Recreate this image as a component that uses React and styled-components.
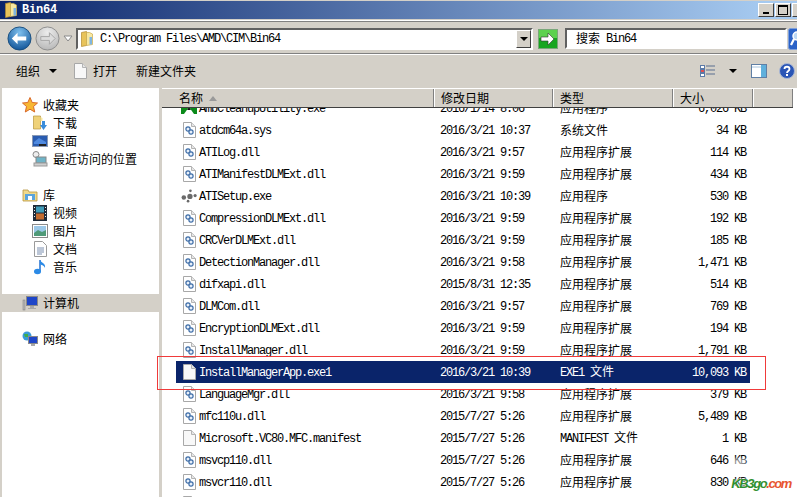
import React from 'react';
import styled, { createGlobalStyle } from 'styled-components';

const GlobalStyle = createGlobalStyle`
    html, body {
        margin: 0;
        padding: 0;
        overflow: hidden;
        background: #d4d0c8;
    }
`;

const cjk = `"Noto Sans CJK SC", "Liberation Sans", sans-serif`;
const mono = `"Liberation Mono", "DejaVu Sans Mono", monospace`;

const Win = styled.div`
    position: relative;
    width: 797px;
    height: 497px;
    display: flex;
    flex-direction: column;
    overflow: hidden;
    background: #d4d0c8;
    font-family: ${cjk};
    font-size: 12px;
    color: #000;
`;

const TitleBar = styled.div`
    height: 18px;
    margin-top: 1px;
    padding-left: 5px;
    display: flex;
    align-items: center;
    gap: 5px;
    background: linear-gradient(90deg, #0a246a 0%, #a6caf0 96%);
    flex-shrink: 0;
`;

const TitleText = styled.span`
    flex: 1;
    color: #fff;
    font: bold 12px ${mono};
    letter-spacing: -0.2px;
`;

const WinBtns = styled.div`
    display: flex;
    height: 14px;
    gap: 1px;
    margin-right: -11px;
`;

const WinBtn = styled.div`
    width: 16px;
    height: 14px;
    flex-shrink: 0;
    box-sizing: border-box;
    background: #d4d0c8;
    border: 1px solid;
    border-color: #fff #404040 #404040 #fff;
    display: flex;
    align-items: center;
    justify-content: center;
`;

const NavBar = styled.div`
    height: 35px;
    margin-top: 1px;
    box-sizing: border-box;
    border-top: 1px solid #fff;
    border-bottom: 1px solid #fff;
    box-shadow: inset 0 1px 0 #808080, inset 0 -1px 0 #808080;
    display: flex;
    align-items: center;
    padding: 2px 0 0 7px;
    flex-shrink: 0;
`;

const Crumbs = styled.div`
    display: flex;
    align-items: center;
    gap: 3px;
    width: 69px;
    flex-shrink: 0;
`;

const AddressBox = styled.div`
    width: 457px;
    height: 22px;
    flex-shrink: 0;
    box-sizing: border-box;
    background: #fff;
    border: 2px solid;
    border-color: #606060 #fff #fff #606060;
    display: flex;
    align-items: center;
    padding-left: 3px;
    gap: 7px;
`;

const AddressText = styled.span`
    flex: 1;
    font: 12px ${mono};
    letter-spacing: -1.2px;
`;

const DropBtn = styled.div`
    width: 15px;
    height: 18px;
    box-sizing: border-box;
    background: #d4d0c8;
    border: 1px solid;
    border-color: #fff #404040 #404040 #fff;
    display: flex;
    align-items: center;
    justify-content: center;
`;

const GoBtn = styled.div`
    width: 20px;
    height: 20px;
    margin-left: 5px;
    margin-right: 7px;
    flex-shrink: 0;
`;

const SearchBox = styled.div`
    width: 222px;
    height: 21px;
    flex-shrink: 0;
    box-sizing: border-box;
    background: #fff;
    border: 2px solid;
    border-color: #606060 #fff #fff #606060;
    display: flex;
    align-items: center;
    padding-left: 9px;
    gap: 6px;
`;

const LatinInline = styled.span`
    font: 12px ${mono};
    letter-spacing: -1.2px;
`;

const SearchBtn = styled.div`
    width: 20px;
    height: 22px;
    margin-left: 1px;
    flex-shrink: 0;
`;

const Toolbar = styled.div`
    height: 32px;
    display: flex;
    align-items: center;
    padding-left: 16px;
    flex-shrink: 0;
`;

const ToolItem = styled.span`
    display: inline-flex;
    align-items: center;
    margin-right: ${(p) => p.$gap || 0}px;
    gap: ${(p) => p.$inner || 0}px;
`;

const ToolLabel = styled.span`
    margin-bottom: 2px;
`;

const ToolRight = styled.div`
    margin-left: auto;
    display: flex;
    align-items: center;
    padding-right: 2px;
`;

const Caret = styled.span`
    width: 0;
    height: 0;
    border-left: 4px solid transparent;
    border-right: 4px solid transparent;
    border-top: 4px solid #000;
`;

const Body = styled.div`
    flex: 1;
    min-height: 0;
    display: flex;
    padding-left: 2px;
    margin-top: 1px;
`;

const NavPane = styled.div`
    width: 157px;
    background: #fff;
    padding-top: 8px;
    box-sizing: border-box;
    flex-shrink: 0;
`;

const NavGroup = styled.div`
    margin-bottom: 18px;
`;

const NavRow = styled.div`
    height: 18px;
    display: flex;
    align-items: center;
    gap: 5px;
    padding-left: ${(p) => (p.$child ? 30 : 20)}px;
    background: ${(p) => (p.$active ? '#d4d0c8' : 'transparent')};
    white-space: nowrap;
`;

const NavIcon = styled.span`
    width: 16px;
    height: 16px;
    display: flex;
    align-items: center;
    justify-content: center;
    flex-shrink: 0;
`;

const NavLabel = styled.span`
    margin-bottom: 2px;
`;

const Main = styled.div`
    flex: 1;
    margin-left: 3px;
    background: #fff;
    display: flex;
    flex-direction: column;
    min-width: 0;
`;

const Header = styled.div`
    height: 20px;
    flex-shrink: 0;
    box-sizing: border-box;
    display: flex;
    background: #d4d0c8;
    border-top: 1px solid #fff;
    border-bottom: 1px solid #404040;
    margin-right: 4px;
`;

const HeadCell = styled.div`
    width: ${(p) => p.$w}px;
    flex-shrink: 0;
    box-sizing: border-box;
    display: flex;
    align-items: center;
    gap: 6px;
    padding-left: ${(p) => p.$pad || 6}px;
    border-right: 1px solid #808080;
    border-left: ${(p) => (p.$first ? 'none' : '1px solid #fff')};
`;

const SortMark = styled.span`
    width: 0;
    height: 0;
    border-left: 4px solid transparent;
    border-right: 4px solid transparent;
    border-bottom: 5px solid #9a9a9a;
`;

const ListClip = styled.div`
    flex: 1;
    overflow: hidden;
`;

const List = styled.div`
    margin-top: -11px;
`;

const Row = styled.div`
    height: 22px;
    display: grid;
    grid-template-columns: 15px 249px 120px 91px 77px auto;
    width: 574px;
    margin-left: 14px;
    align-items: center;
    background: ${(p) => (p.$sel ? '#0a246a' : 'transparent')};
    color: ${(p) => (p.$sel ? '#fff' : '#000')};
`;

const IconCell = styled.div`
    margin-left: 5px;
    width: 16px;
    height: 18px;
    display: flex;
    align-items: center;
    justify-content: center;
`;

const NameCell = styled.div`
    padding: 1px 0 0 8px;
    font: 12px ${mono};
    letter-spacing: -1.2px;
    white-space: nowrap;
    color: inherit;
`;

const DateCell = styled(NameCell)`
    padding-left: 0;
`;

const TypeCell = styled.div`
    white-space: nowrap;
    margin-bottom: 2px;
`;

const SizeCell = styled(NameCell)`
    padding-left: 0;
    text-align: right;
`;

const KbCell = styled(NameCell)`
    padding-left: 6px;
`;

const RedFrame = styled.div`
    position: absolute;
    left: 157px;
    top: 356px;
    width: 609px;
    height: 34px;
    box-sizing: border-box;
    border: 1px solid #f03a3a;
    pointer-events: none;
`;

const Watermark = styled.div`
    position: absolute;
    right: 6px;
    bottom: 6px;
    font: italic bold 13px "Liberation Sans", sans-serif;
    color: #2f8f2f;
    letter-spacing: -1.4px;
    text-shadow: 0 0 2px #fff, 0 0 2px #fff;

    &::before {
        content: '';
        position: absolute;
        left: -1px;
        top: -18px;
        width: 16px;
        height: 16px;
        background: rgba(255, 255, 255, 0.55);
        filter: blur(1px);
    }
`;

const WatermarkEnd = styled.span`
    color: #e8552f;
`;

const FolderIcon = () => (
    <svg width="12" height="16" viewBox="0 0 12 16">
        <path d="M.5 1.500l5-1v14l-5 1z" fill="#e8c35a" stroke="#b18a2e" strokeWidth=".7" />
        <path d="M5.500 1.500h3l3 1.500v10.500l-6 1z" fill="#f7e7a1" stroke="#c9a94a" strokeWidth=".7" />
        <path d="M8.500 6h2.500v7.500H8.500z" fill="#7fb5e0" />
    </svg>
);

const PageIcon = ({ blank }) => (
    <svg width="13" height="16" viewBox="0 0 13 16">
        <path d="M.5.5h8l4 4v11H.500z" fill={blank ? '#f8f8f8' : '#fff'} stroke="#a8a8a8" />
        <path d="M8.500.5v4h4" fill="#e6e6e6" stroke="#b4b4b4" />
        {!blank && (
            <g fill="#e8f0fa" stroke="#3f6ea8" strokeWidth="1.200">
                <circle cx="5" cy="7" r="2.100" />
                <circle cx="8" cy="10" r="2.100" />
            </g>
        )}
    </svg>
);

const SetupIcon = () => (
    <svg width="17" height="14" viewBox="0 0 17 14" fill="#6a6a6a">
        <circle cx="3" cy="8.500" r="2.400" />
        <circle cx="9.500" cy="7.500" r="2.800" />
        <circle cx="15" cy="6.500" r="1.700" />
        <circle cx="10" cy="1.500" r="1.400" />
        <circle cx="7.500" cy="12.500" r="1.400" />
    </svg>
);

const GreenIcon = () => (
    <svg width="16" height="18" viewBox="0 0 16 18">
        <rect x="0" y="0" width="16" height="15" fill="#0b8a1a" />
        <path d="M3 15l5-7 5 7z" fill="#fff" />
        <path d="M8 8l-2 3h4z" fill="#111" />
    </svg>
);

const Star = () => (
    <svg width="16" height="16" viewBox="0 0 16 16">
        <path d="M8 .5l2.200 5 5.300.5-4 3.500 1.200 5.500L8 12.200 3.300 15l1.200-5.500-4-3.500 5.300-.5z" fill="#f7b733" stroke="#d9682a" />
    </svg>
);

const Download = () => (
    <svg width="16" height="16" viewBox="0 0 16 16">
        <path d="M1.500 1h7v13h-7z" fill="#efd27a" stroke="#b8963c" strokeWidth=".7" />
        <path d="M8.500 2l2 1v3h-2z" fill="#f7e7a1" />
        <path d="M10 6h3v4h2l-3.500 5L8 10h2z" fill="#3a8ddb" />
    </svg>
);

const Desktop = () => (
    <svg width="16" height="16" viewBox="0 0 16 16">
        <rect x=".5" y="2.500" width="15" height="11" fill="#2a5cb0" stroke="#8a9ab5" />
        <rect x="7" y="11" width="7" height="2" fill="#222" />
        <path d="M2 9l5-4 7 4v2H2z" fill="#4f8ae0" />
    </svg>
);

const Recent = () => (
    <svg width="16" height="16" viewBox="0 0 16 16">
        <circle cx="4" cy="3.500" r="3" fill="#eee" stroke="#888" />
        <rect x="4" y="6" width="10" height="6" fill="#6fb4c8" stroke="#888" />
        <rect x="2" y="12" width="13" height="3" fill="#cfcfcf" stroke="#999" />
    </svg>
);

const Library = () => (
    <svg width="16" height="16" viewBox="0 0 16 16">
        <path d="M1 3h5l1 2h8v9H1z" fill="#f1d98a" stroke="#b8963c" strokeWidth=".8" />
        <rect x="3" y="7" width="10" height="6" fill="#5ba4dc" />
        <rect x="6" y="9" width="4" height="4" fill="#fff" />
    </svg>
);

const Video = () => (
    <svg width="14" height="16" viewBox="0 0 14 16">
        <rect width="14" height="16" fill="#1f2a38" />
        <rect x="3" y="1.500" width="8" height="6" fill="#3f9bb8" />
        <rect x="3" y="8.500" width="8" height="6" fill="#c46b2e" />
        <path d="M1 2h1v1H1zM1 5h1v1H1zM1 8h1v1H1zM1 11h1v1H1zM12 2h1v1h-1zM12 5h1v1h-1zM12 8h1v1h-1zM12 11h1v1h-1z" fill="#eee" />
    </svg>
);

const Picture = () => (
    <svg width="16" height="14" viewBox="0 0 16 14">
        <rect x=".5" y=".5" width="15" height="13" fill="#fff" stroke="#8a8a8a" />
        <rect x="2" y="2" width="12" height="10" fill="#9cc8e8" />
        <path d="M2 9l4-3 4 2 4-2v6H2z" fill="#4f9a78" />
    </svg>
);

const Doc = () => (
    <svg width="13" height="16" viewBox="0 0 13 16">
        <path d="M.5.5h8l4 4v11H.500z" fill="#fff" stroke="#9a9a9a" />
        <path d="M3 7h7M3 9h7M3 11h7M3 13h5" stroke="#7a8fb0" />
    </svg>
);

const Music = () => (
    <svg width="14" height="16" viewBox="0 0 14 16">
        <path d="M7 1v11" stroke="#1f6fd0" strokeWidth="1.500" />
        <ellipse cx="4.500" cy="12.500" rx="3.500" ry="2.800" fill="#2b8ae6" />
        <path d="M7 1c1 3 6 3 5 8-1-3-4-3-5-4z" fill="#2b8ae6" />
    </svg>
);

const Computer = () => (
    <svg width="16" height="16" viewBox="0 0 16 16">
        <rect x="1" y="5" width="2" height="10" fill="#b8b8b8" stroke="#777" strokeWidth=".5" />
        <rect x="4.500" y="1.500" width="11" height="9" fill="#1f46c8" stroke="#8a8a8a" />
        <path d="M8 11h4v2h2v1H6v-1h2z" fill="#a8a8a8" />
    </svg>
);

const Network = () => (
    <svg width="16" height="16" viewBox="0 0 16 16">
        <circle cx="5" cy="5" r="4.500" fill="#3a9ad8" />
        <path d="M2 3h4v3H3zM6 6h2v2H6z" fill="#3fae49" />
        <rect x="6.500" y="5.500" width="9" height="7" fill="#1f46c8" stroke="#8a8a8a" />
        <path d="M9 13h4v2H9z" fill="#a8a8a8" />
    </svg>
);

const NavCircle = ({ on }) => (
    <svg width="25" height="25" viewBox="0 0 26 26">
        <defs>
            <radialGradient id={on ? 'bk' : 'fw'} cx="50%" cy="25%" r="80%">
                <stop offset="0" stopColor={on ? '#7fc0ee' : '#ededed'} />
                <stop offset="1" stopColor={on ? '#0c4f94' : '#b5b5b5'} />
            </radialGradient>
        </defs>
        <circle cx="13" cy="13" r="12" fill={`url(#${on ? 'bk' : 'fw'})`} stroke={on ? '#1c4f7e' : '#8e8e8e'} />
        {on ? (
            <path d="M5 13l6-6v4h9v4h-9v4z" fill="#fff" />
        ) : (
            <path d="M21 13l-6-6v4H6v4h9v4z" fill="#dcdcdc" stroke="#a5a5a5" />
        )}
    </svg>
);

const GoIcon = () => (
    <svg width="20" height="20" viewBox="0 0 20 20">
        <rect x=".5" y=".5" width="19" height="19" fill="#17a51f" stroke="#7aa77a" />
        <rect x="1" y="1" width="18" height="8" fill="#5cd14e" />
        <path d="M3 8h7V4l6 6-6 6v-4H3z" fill="#fff" stroke="#333" strokeWidth=".6" />
    </svg>
);

const SearchIcon = () => (
    <svg width="20" height="22" viewBox="0 0 20 22">
        <rect x=".5" y=".5" width="19" height="21" rx="2" fill="#2a62c8" stroke="#7f9fd8" />
        <circle cx="9" cy="8" r="4" fill="#bcd8f5" stroke="#fff" strokeWidth="1.500" />
        <path d="M6 11l-3 6" stroke="#fff" strokeWidth="2.200" />
    </svg>
);

const ViewsIcon = () => (
    <svg width="16" height="13" viewBox="0 0 16 13">
        <rect x=".5" y=".5" width="4" height="3" fill="#fff" stroke="#5b7aa8" />
        <rect x=".5" y="4.500" width="4" height="3" fill="#e05050" stroke="#5b7aa8" />
        <rect x=".5" y="8.500" width="4" height="3" fill="#fff" stroke="#5b7aa8" />
        <path d="M6 1h9M6 5h9M6 9h9" stroke="#5b6f90" />
    </svg>
);

const PreviewIcon = () => (
    <svg width="16" height="14" viewBox="0 0 16 14">
        <rect x=".5" y=".5" width="15" height="13" fill="#fff" stroke="#5f7fa5" />
        <rect x="10" y="1" width="5" height="12" fill="#5fb0dc" />
        <path d="M1 3h9" stroke="#a8c4de" />
    </svg>
);

const HelpIcon = () => (
    <svg width="16" height="16" viewBox="0 0 16 16">
        <circle cx="8" cy="8" r="7.500" fill="#2a55b5" stroke="#a9b7d4" />
        <path d="M5.500 6c0-3 5-3 5 0 0 2-2.500 2-2.500 4" fill="none" stroke="#fff" strokeWidth="1.800" />
        <rect x="7" y="11" width="2" height="2" fill="#fff" />
    </svg>
);

const nav = [
    [
        { icon: <Star />, label: '收藏夹' },
        { icon: <Download />, label: '下载', child: true },
        { icon: <Desktop />, label: '桌面', child: true },
        { icon: <Recent />, label: '最近访问的位置', child: true },
    ],
    [
        { icon: <Library />, label: '库' },
        { icon: <Video />, label: '视频', child: true },
        { icon: <Picture />, label: '图片', child: true },
        { icon: <Doc />, label: '文档', child: true },
        { icon: <Music />, label: '音乐', child: true },
    ],
    [{ icon: <Computer />, label: '计算机', active: true }],
    [{ icon: <Network />, label: '网络' }],
];

const D = '2016/3/21';
const M = '2015/7/27';
const EXT = '应用程序扩展';

const files = [
    { name: 'AmbCleanupUtility.exe', date: '2016/1/14 8:06', type: '应用程序', size: '6,026', kind: 'green' },
    { name: 'atdcm64a.sys', date: `${D} 10:37`, type: '系统文件', size: '34' },
    { name: 'ATILog.dll', date: `${D} 9:57`, type: EXT, size: '114' },
    { name: 'ATIManifestDLMExt.dll', date: `${D} 9:59`, type: EXT, size: '434' },
    { name: 'ATISetup.exe', date: `${D} 10:39`, type: '应用程序', size: '530', kind: 'setup' },
    { name: 'CompressionDLMExt.dll', date: `${D} 9:59`, type: EXT, size: '192' },
    { name: 'CRCVerDLMExt.dll', date: `${D} 9:59`, type: EXT, size: '185' },
    { name: 'DetectionManager.dll', date: `${D} 9:58`, type: EXT, size: '1,471' },
    { name: 'difxapi.dll', date: '2015/8/31 12:35', type: EXT, size: '514' },
    { name: 'DLMCom.dll', date: `${D} 9:57`, type: EXT, size: '769' },
    { name: 'EncryptionDLMExt.dll', date: `${D} 9:59`, type: EXT, size: '194' },
    { name: 'InstallManager.dll', date: `${D} 9:59`, type: EXT, size: '1,791' },
    { name: 'InstallManagerApp.exe1', date: `${D} 10:39`, latin: 'EXE1', type: '文件', size: '10,093', kind: 'blank', sel: true },
    { name: 'LanguageMgr.dll', date: `${D} 9:58`, type: EXT, size: '379' },
    { name: 'mfc110u.dll', date: `${M} 5:26`, type: EXT, size: '5,489' },
    { name: 'Microsoft.VC80.MFC.manifest', date: `${M} 5:26`, latin: 'MANIFEST', type: '文件', size: '1', kind: 'blank' },
    { name: 'msvcp110.dll', date: `${M} 5:26`, type: EXT, size: '646' },
    { name: 'msvcr110.dll', date: `${M} 5:26`, type: EXT, size: '830' },
];

const fileIcon = (kind) => {
    if (kind === 'green') return <GreenIcon />;
    if (kind === 'setup') return <SetupIcon />;
    if (kind === 'blank') return <PageIcon blank />;
    return <PageIcon />;
};

export default function App() {
    return (
        <Win>
            <GlobalStyle />
            <TitleBar>
                <FolderIcon />
                <TitleText>Bin64</TitleText>
                <WinBtns>
                    <WinBtn>
                        <svg width="8" height="8"><rect x="1" y="6" width="6" height="2" /></svg>
                    </WinBtn>
                    <WinBtn>
                        <svg width="10" height="10"><rect x=".5" y="1" width="9" height="8.500" fill="none" stroke="#000" /><rect y="0" width="10" height="2" /></svg>
                    </WinBtn>
                    <WinBtn />
                </WinBtns>
            </TitleBar>
            <NavBar>
                <Crumbs>
                    <NavCircle on />
                    <NavCircle />
                    <svg width="10" height="8" viewBox="0 0 10 8"><path d="M1 1h8L5 6z" fill="#fff" stroke="#8a8a8a" /></svg>
                </Crumbs>
                <AddressBox>
                    <FolderIcon />
                    <AddressText>C:\Program Files\AMD\CIM\Bin64</AddressText>
                    <DropBtn><Caret /></DropBtn>
                </AddressBox>
                <GoBtn><GoIcon /></GoBtn>
                <SearchBox>
                    <ToolLabel>搜索</ToolLabel>
                    <LatinInline>Bin64</LatinInline>
                </SearchBox>
                <SearchBtn><SearchIcon /></SearchBtn>
            </NavBar>
            <Toolbar>
                <ToolItem $gap={17} $inner={9}><ToolLabel>组织</ToolLabel><Caret /></ToolItem>
                <ToolItem $gap={19} $inner={6}><PageIcon blank /><ToolLabel>打开</ToolLabel></ToolItem>
                <ToolItem><ToolLabel>新建文件夹</ToolLabel></ToolItem>
                <ToolRight>
                    <ToolItem $gap={13}><ViewsIcon /></ToolItem>
                    <ToolItem $gap={14}><Caret /></ToolItem>
                    <ToolItem $gap={12}><PreviewIcon /></ToolItem>
                    <ToolItem><HelpIcon /></ToolItem>
                </ToolRight>
            </Toolbar>
            <Body>
                <NavPane>
                    {nav.map((group, i) => (
                        <NavGroup key={i}>
                            {group.map((item) => (
                                <NavRow key={item.label} $child={item.child} $active={item.active}>
                                    <NavIcon>{item.icon}</NavIcon>
                                    <NavLabel>{item.label}</NavLabel>
                                </NavRow>
                            ))}
                        </NavGroup>
                    ))}
                </NavPane>
                <Main>
                    <Header>
                        <HeadCell $w={272} $pad={17} $first><ToolLabel>名称</ToolLabel><SortMark /></HeadCell>
                        <HeadCell $w={119}><ToolLabel>修改日期</ToolLabel></HeadCell>
                        <HeadCell $w={120}><ToolLabel>类型</ToolLabel></HeadCell>
                        <HeadCell $w={80}><ToolLabel>大小</ToolLabel></HeadCell>
                        <HeadCell $w={40} />
                    </Header>
                    <ListClip>
                        <List>
                            {files.map((f) => (
                                <Row key={f.name} $sel={f.sel}>
                                    <IconCell>{fileIcon(f.kind)}</IconCell>
                                    <NameCell>{f.name}</NameCell>
                                    <DateCell>{f.date}</DateCell>
                                    <TypeCell>
                                        {f.latin && <LatinInline>{f.latin} </LatinInline>}
                                        {f.type}
                                    </TypeCell>
                                    <SizeCell>{f.size}</SizeCell>
                                    <KbCell>KB</KbCell>
                                </Row>
                            ))}
                            <Row>
                                <IconCell><PageIcon /></IconCell>
                            </Row>
                        </List>
                    </ListClip>
                </Main>
            </Body>
            <RedFrame />
            <Watermark>KB3go<WatermarkEnd>.com</WatermarkEnd></Watermark>
        </Win>
    );
}
